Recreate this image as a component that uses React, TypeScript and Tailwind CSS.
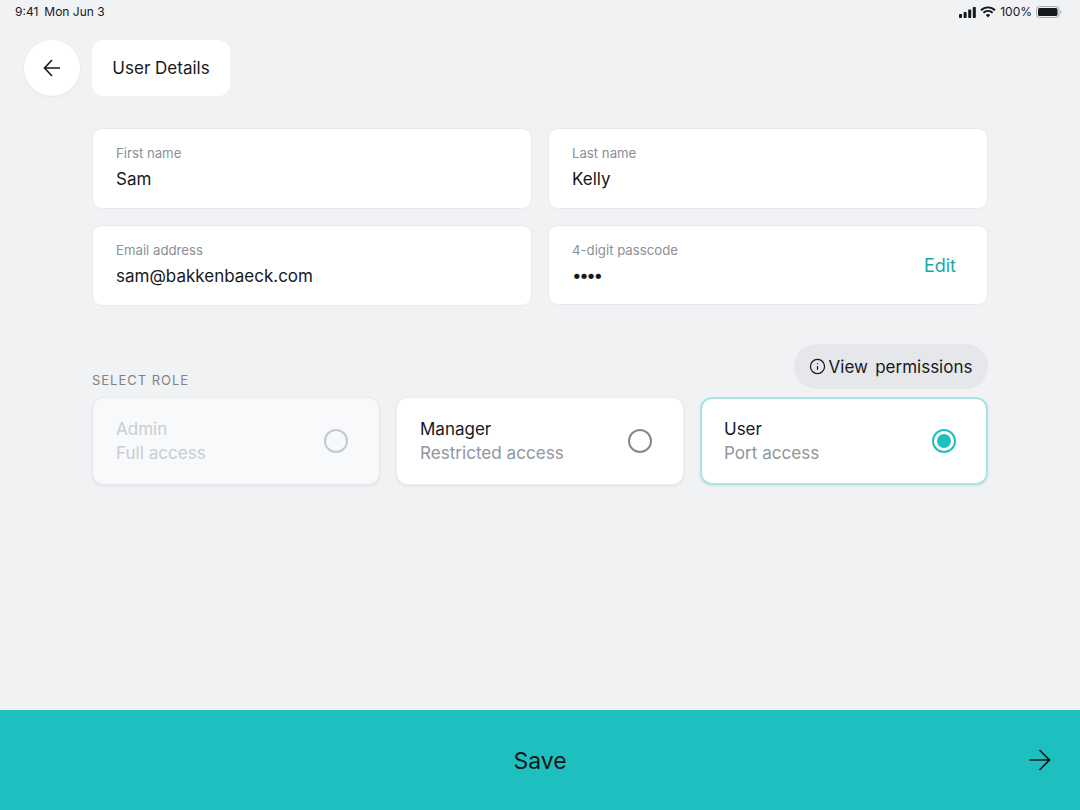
import { Info } from 'lucide-react';

interface FieldProps {
  label: string;
  value: string;
}

function Field({ label, value }: FieldProps) {
  return (
    <div className="h-[81px] rounded-[10px] border border-[#e8e9ec] bg-white px-[23px] pt-[15px]">
      <p className="text-[13.2px] leading-[18px] text-[#8a9096]">{label}</p>
      <p className="mt-[5px] text-[17px] leading-[24px] text-[#15191c]">{value}</p>
    </div>
  );
}

interface RoleProps {
  title: string;
  subtitle: string;
  state: 'disabled' | 'idle' | 'selected';
}

function RoleCard({ title, subtitle, state }: RoleProps) {
  const disabled = state === 'disabled';
  const selected = state === 'selected';
  return (
    <div
      className={
        'flex h-[88px] w-[288px] items-center justify-between rounded-[12px] shadow-[0_1px_3px_rgba(0,0,0,0.08)] ' +
        (selected
          ? 'border-2 border-[#a5e5e4] bg-white pl-[22px] pr-[30px]'
          : disabled
            ? 'border border-[#e8e9ec] bg-[#f8f9fb] pl-[23px] pr-[31px]'
            : 'border border-[#eceded] bg-white pl-[23px] pr-[31px]')
      }
    >
      <div>
        <p className={'text-[17px] leading-[24px] ' + (disabled ? 'text-[#c9cdd2]' : 'text-[#15191c]')}>{title}</p>
        <p className={'text-[17.1px] leading-[24px] ' + (disabled ? 'text-[#c9cdd2]' : 'text-[#8f959b]')}>{subtitle}</p>
      </div>
      {selected ? (
        <div className="flex h-[24px] w-[24px] items-center justify-center rounded-full border-2 border-[#1dc0bf]">
          <div className="h-[14px] w-[14px] rounded-full bg-[#1dc0bf]" />
        </div>
      ) : (
        <div className={'h-[24px] w-[24px] rounded-full border-2 ' + (disabled ? 'border-[#c4c8cd]' : 'border-[#84898f]')} />
      )}
    </div>
  );
}

function StatusIcons() {
  return (
    <div className="flex items-center">
      <svg width="17" height="11" viewBox="0 0 17 11" fill="#15191c">
        <rect x="0" y="7" width="3" height="4" rx="0.7" />
        <rect x="4.6" y="5" width="3" height="6" rx="0.7" />
        <rect x="9.2" y="2.5" width="3" height="8.5" rx="0.7" />
        <rect x="13.8" y="0" width="3" height="11" rx="0.7" />
      </svg>
      <svg className="ml-[4px]" width="16" height="12" viewBox="0 0 16 12" fill="none" stroke="#15191c" strokeWidth="1.9">
        <path d="M1 4.2a10 10 0 0 1 14 0" />
        <path d="M3.4 6.7a6.6 6.6 0 0 1 9.2 0" />
        <path d="M8 11.4 5.8 9.1a3.1 3.1 0 0 1 4.4 0z" fill="#15191c" stroke="none" />
      </svg>
      <span className="ml-[4px] text-[12px] leading-[16px] text-[#15191c]">100%</span>
      <svg className="ml-[4px]" width="26" height="12" viewBox="0 0 26 12" fill="none">
        <rect x="0.5" y="0.5" width="22.5" height="11" rx="3" stroke="#a9abad" />
        <rect x="2" y="2" width="19.5" height="8" rx="1.6" fill="#15191c" />
        <path d="M24.3 4.2c.8.3 1.3 1 1.3 1.8s-.5 1.5-1.3 1.8z" fill="#a9abad" />
      </svg>
    </div>
  );
}

export default function App() {
  return (
    <div className="flex h-[810px] w-[1080px] flex-col overflow-hidden bg-[#f1f2f4] font-['Inter',sans-serif]">
      {/* Status bar */}
      <div className="flex h-[24px] items-center justify-between pl-[15px] pr-[18px] text-[12px] leading-[16px] text-[#15191c]">
        <div className="flex gap-[6px]">
          <span>9:41</span>
          <span>Mon Jun 3</span>
        </div>
        <StatusIcons />
      </div>

      {/* Header */}
      <div className="mt-[16px] flex gap-[12px] pl-[24px]">
        <button className="flex h-[56px] w-[56px] items-center justify-center rounded-full bg-white text-[#15191c] shadow-[0_1px_3px_rgba(0,0,0,0.06)]">
          <svg width="18" height="18" viewBox="0 0 18 18" fill="none" stroke="currentColor" strokeWidth="1.6">
            <path d="M17 9H1.5M9 1 1.5 9 9 17" />
          </svg>
        </button>
        <div className="flex h-[56px] w-[138px] items-center justify-center rounded-[12px] bg-white pt-[2px] text-[17px] text-[#15191c]">
          User Details
        </div>
      </div>

      {/* Form */}
      <div className="mx-[92px] mt-[32px] flex-1">
        <div className="grid grid-cols-2 gap-x-[16px] gap-y-[16px]">
          <Field label="First name" value="Sam" />
          <Field label="Last name" value="Kelly" />
          <Field label="Email address" value="sam@bakkenbaeck.com" />
          <div className="flex h-[80px] items-center justify-between rounded-[10px] border border-[#e8e9ec] bg-white pl-[23px] pr-[31px]">
            <div className="self-start pt-[15px]">
              <p className="text-[13.2px] leading-[18px] text-[#8a9096]">4-digit passcode</p>
              <p className="mt-[4px] text-[17px] leading-[24px] tracking-[-2.4px] text-[#15191c]">••••</p>
            </div>
            <span className="text-[18px] text-[#19a9a8]">Edit</span>
          </div>
        </div>

        <div className="mt-[38px] flex items-end justify-between">
          <p className="pb-[1px] text-[13px] leading-[16px] tracking-[0.075em] text-[#7d8389]">SELECT ROLE</p>
          <button className="flex h-[45px] w-[194px] items-center justify-center gap-[3px] rounded-full bg-[#e6e7ea] pr-[1px] pt-[2px] text-[17px] text-[#15191c]">
            <Info size={17} strokeWidth={1.75} className="-mt-[2px]" />
            <span className="[word-spacing:2.5px]">View permissions</span>
          </button>
        </div>

        <div className="mt-[8px] flex gap-[16px]">
          <RoleCard title="Admin" subtitle="Full access" state="disabled" />
          <RoleCard title="Manager" subtitle="Restricted access" state="idle" />
          <RoleCard title="User" subtitle="Port access" state="selected" />
        </div>
      </div>

      {/* Save bar */}
      <div className="relative flex h-[100px] items-center justify-center bg-[#1dc0bf] pt-[2px] text-[#15191c]">
        <span className="text-[23px]">Save</span>
        <svg
          className="absolute right-[29px] top-[39px]"
          width="22"
          height="22"
          viewBox="0 0 22 22"
          fill="none"
          stroke="currentColor"
          strokeWidth="1.7"
        >
          <path d="M0.5 11H20M10.5 1 20.5 11 10.5 21" />
        </svg>
      </div>
    </div>
  );
}
